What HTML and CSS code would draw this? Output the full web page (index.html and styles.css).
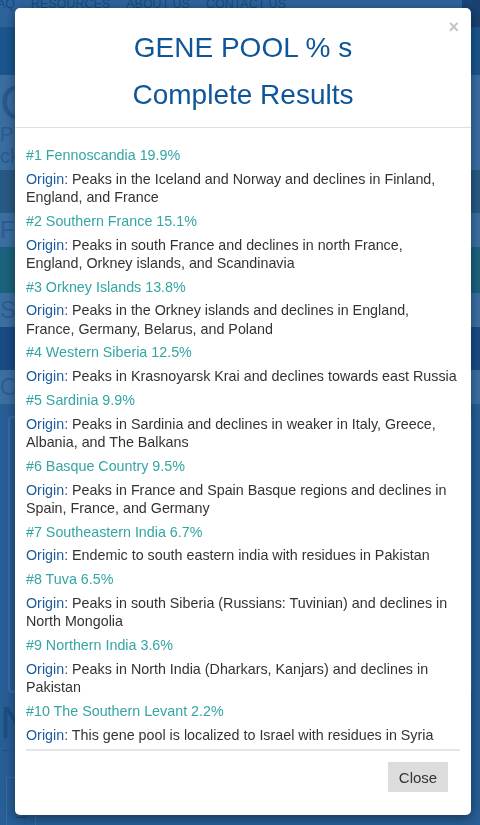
FILE: index.html
```html
<!doctype html>
<html lang="en">
<head>
    <meta charset="UTF-8">
    <meta name="viewport" content="width=device-width, initial-scale=1.0">
    <link rel="stylesheet" href="styles.css">
    <title>Gene Pool Results</title>
</head>
<body>
    <div class="page">
        <div class="nav">
            <span>FAQ</span>
            <span>RESOURCES</span>
            <span>ABOUT US</span>
            <span>CONTACT US</span>
            <span class="nav-btn">M</span>
        </div>
        <div class="band band-dark"></div>
        <div class="band band-head">GENE POOL</div>
        <div class="band band-light">P 3<br>ck</div>
        <div class="band band-grey"></div>
        <div class="band band-row">Fe</div>
        <div class="band band-teal"></div>
        <div class="band band-row">Sc</div>
        <div class="band band-navy"></div>
        <div class="band band-row">Or</div>
        <div class="band band-main">
            <div class="panel"></div>
        </div>
        <div class="band band-head2">N<div class="sub">eed</div></div>
        <div class="band band-main2">
            <div class="zoom-btns">
                <span>+</span>
                <span>&minus;</span>
            </div>
        </div>
    </div>

    <div class="backdrop"></div>

    <div class="modal">
        <div class="modal-header">
            <span class="close-x">&times;</span>
            <h2 class="modal-title">GENE POOL % s<br>Complete Results</h2>
        </div>
        <div class="modal-body">
            <div class="pool">
                <p class="pool-name">#1 Fennoscandia 19.9%</p>
                <p class="pool-origin"><span class="label">Origin:</span> Peaks in the Iceland and Norway and declines in Finland, England, and France</p>
            </div>
            <div class="pool">
                <p class="pool-name">#2 Southern France 15.1%</p>
                <p class="pool-origin"><span class="label">Origin:</span> Peaks in south France and declines in north France, England, Orkney islands, and Scandinavia</p>
            </div>
            <div class="pool">
                <p class="pool-name">#3 Orkney Islands 13.8%</p>
                <p class="pool-origin"><span class="label">Origin:</span> Peaks in the Orkney islands and declines in England, France, Germany, Belarus, and Poland</p>
            </div>
            <div class="pool">
                <p class="pool-name">#4 Western Siberia 12.5%</p>
                <p class="pool-origin"><span class="label">Origin:</span> Peaks in Krasnoyarsk Krai and declines towards east Russia</p>
            </div>
            <div class="pool">
                <p class="pool-name">#5 Sardinia 9.9%</p>
                <p class="pool-origin"><span class="label">Origin:</span> Peaks in Sardinia and declines in weaker in Italy, Greece, Albania, and The Balkans</p>
            </div>
            <div class="pool">
                <p class="pool-name">#6 Basque Country 9.5%</p>
                <p class="pool-origin"><span class="label">Origin:</span> Peaks in France and Spain Basque regions and declines in Spain, France, and Germany</p>
            </div>
            <div class="pool">
                <p class="pool-name">#7 Southeastern India 6.7%</p>
                <p class="pool-origin"><span class="label">Origin:</span> Endemic to south eastern india with residues in Pakistan</p>
            </div>
            <div class="pool">
                <p class="pool-name">#8 Tuva 6.5%</p>
                <p class="pool-origin"><span class="label">Origin:</span> Peaks in south Siberia (Russians: Tuvinian) and declines in North Mongolia</p>
            </div>
            <div class="pool">
                <p class="pool-name">#9 Northern India 3.6%</p>
                <p class="pool-origin"><span class="label">Origin:</span> Peaks in North India (Dharkars, Kanjars) and declines in Pakistan</p>
            </div>
            <div class="pool">
                <p class="pool-name">#10 The Southern Levant 2.2%</p>
                <p class="pool-origin"><span class="label">Origin:</span> This gene pool is localized to Israel with residues in Syria</p>
            </div>
            <hr class="divider">
            <div class="modal-footer">
                <button class="btn-close">Close</button>
            </div>
        </div>
    </div>
</body>
</html>
```

FILE: styles.css
```css
body {
    margin: 0;
    height: 825px;
    overflow: hidden;
    font-family: "Liberation Sans", Arial, sans-serif;
    background-color: #1d5c97;
}

/* page behind the modal */

.page {
    margin-top: -8px;
    color: #174a80;
}

.nav {
    height: 35px;
    display: flex;
    gap: 16px;
    align-items: flex-start;
    padding-top: 3px;
    box-sizing: border-box;
    margin-left: -10px;
    font-size: 12.5px;
    line-height: 18px;
    background-color: #2f6aa5;
    color: #1b4f86;
}

.nav-btn {
    margin-left: auto;
    margin-top: -3px;
    width: 18px;
    height: 35px;
    background-color: #1a4578;
}

.band {
    overflow: hidden;
    white-space: nowrap;
}

.band-dark {
    height: 48px;
    background-color: #1c5b96;
}

.band-head {
    height: 48px;
    line-height: 56px;
    font-size: 48px;
    background-color: #3d75ad;
    color: #2a5f95;
}

.band-light {
    height: 47px;
    font-size: 20px;
    line-height: 22px;
    background-color: #3d75ad;
    color: #2d6197;
}

.band-grey {
    height: 43px;
    background-color: #2b5f8d;
}

.band-row {
    height: 34px;
    line-height: 34px;
    font-size: 24px;
    background-color: #3e76ac;
    color: #2f6399;
}

.band-teal {
    height: 46px;
    background-color: #1d6986;
}

.band-navy {
    height: 43px;
    background-color: #1b4f8e;
}

.band-main {
    height: 297px;
    padding: 12px 8px;
    box-sizing: border-box;
    background-color: #2a64a0;
}

.panel {
    height: 100%;
    border: 2px solid #3b74ad;
    border-radius: 4px;
}

.band-head2 {
    height: 50px;
    font-size: 44px;
    line-height: 44px;
    background-color: #2a64a0;
    color: #1d528c;
}

.band-head2 .sub {
    font-size: 18px;
    line-height: 18px;
}

.band-main2 {
    height: 100px;
    padding-top: 26px;
    box-sizing: border-box;
    background-color: #2a64a0;
}

.zoom-btns {
    display: flex;
    flex-direction: column;
    width: 28px;
    margin-left: 6px;
    border: 1px solid #3c73aa;
    color: #1d4f86;
    font-size: 20px;
    line-height: 26px;
    text-align: center;
}

.backdrop {
    position: fixed;
    top: 0;
    left: 0;
    right: 0;
    bottom: 0;
    background-color: rgba(0, 0, 0, 0.06);
}

/* modal */

.modal {
    position: fixed;
    top: 8px;
    left: 15px;
    width: 456px;
    height: 807px;
    box-sizing: border-box;
    background-color: #fff;
    border-radius: 5px;
    box-shadow: 0 3px 12px rgba(0, 0, 0, 0.45);
    overflow: hidden;
}

.modal-header {
    position: relative;
    padding: 16px 10px 9px;
    border-bottom: 1px solid #e0e0e0;
    text-align: center;
}

.close-x {
    position: absolute;
    top: 9px;
    right: 12px;
    font-size: 18px;
    font-weight: bold;
    color: #c4c4c4;
}

.modal-title {
    margin: 0;
    font-size: 28px;
    font-weight: normal;
    line-height: 47px;
    color: #0f5599;
}

.modal-body {
    padding: 18px 11px 0;
}

.pool p {
    margin: 0 0 5.6px;
    font-size: 14.3px;
    line-height: 18.2px;
}

.pool-name {
    color: #34a5a4;
}

.pool-origin {
    color: #333;
}

.label {
    color: #1c5b9c;
}

.divider {
    margin: 2px 0 0;
    border: 0;
    border-top: 2px solid #e5e5e5;
}

.modal-footer {
    display: flex;
    justify-content: flex-end;
    padding: 11px 12px 0;
}

.btn-close {
    width: 60px;
    height: 30px;
    border: 0;
    border-radius: 0;
    background-color: #dcdcdc;
    font-family: "Liberation Sans", Arial, sans-serif;
    font-size: 15px;
    color: #333;
}
```
